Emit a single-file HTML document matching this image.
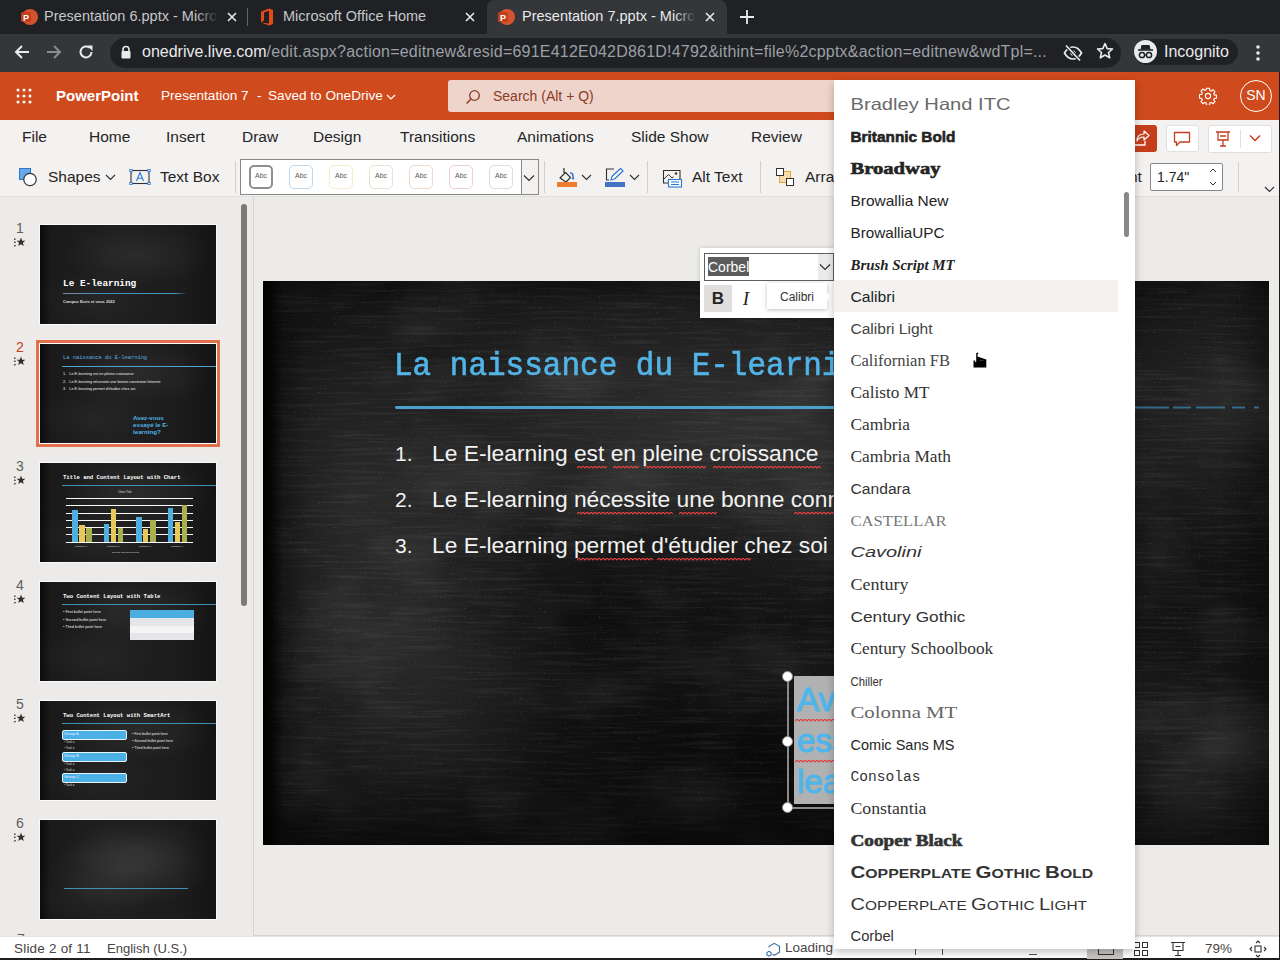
<!DOCTYPE html>
<html><head><meta charset="utf-8">
<style>
*{box-sizing:border-box;margin:0;padding:0}
html,body{width:1280px;height:960px;overflow:hidden;background:#eae9e7;font-family:"Liberation Sans",sans-serif;}
.a{position:absolute;white-space:nowrap}
#tabs{left:0;top:0;width:1280px;height:34px;background:#202124}
#addr{left:0;top:34px;width:1280px;height:38px;background:#35363a}
#hdr{left:0;top:72px;width:1280px;height:48px;background:#cf4a1c}
#rib{left:0;top:120px;width:1280px;height:77px;background:#f3f2f1;border-bottom:1px solid #e1dfdd}
#left{left:0;top:197px;width:253px;height:739px;background:#ecebe9}
#main{left:253px;top:197px;width:1026px;height:739px;background:#ecebe7;border-left:1px solid #d6d4d2;border-bottom:1px solid #d6d4d2}
#status{left:0;top:936px;width:1280px;height:24px;background:#fff;border-top:1px solid #e4e2e0;border-bottom:2px solid #1e1e1e}
#slide{left:263px;top:281px;width:1006px;height:564px;background:#1c1c1c;overflow:hidden}
#dd{left:834px;top:80px;width:301px;height:869px;background:#fff;box-shadow:0 3px 8px rgba(0,0,0,.25);overflow:hidden}
</style></head><body>
<div id="tabs" class="a">
 <svg class="a" style="left:20px;top:8px" width="18" height="18" viewBox="0 0 18 18"><circle cx="10" cy="9" r="8" fill="#d35230"/><rect x="1" y="4" width="10" height="10" rx="1.5" fill="#c43e1c"/><text x="6" y="12.5" font-family="Liberation Sans" font-weight="bold" font-size="9" fill="#fff" text-anchor="middle">P</text></svg>
 <div class="a" style="left:44px;top:8px;font-size:14.5px;color:#c4c7cb;width:172px;overflow:hidden">Presentation 6.pptx - Micro</div>
 <div class="a" style="left:196px;top:6px;width:22px;height:20px;background:linear-gradient(90deg,rgba(32,33,36,0),#202124)"></div>
 <svg class="a" style="left:227px;top:12px" width="10" height="10" viewBox="0 0 10 10"><path d="M1 1L9 9M9 1L1 9" stroke="#e8eaed" stroke-width="1.6"/></svg>
 <div class="a" style="left:247px;top:8px;width:1px;height:18px;background:#5f6368"></div>
 <svg class="a" style="left:259px;top:8px" width="16" height="18" viewBox="0 0 16 18"><path d="M2 3.5L10 0.5L14 2V16L10 17.5L2 14.5L10 15.5V2.8L5 4.5V12.5L2 14.5Z" fill="#e64a19"/></svg>
 <div class="a" style="left:283px;top:8px;font-size:14.5px;color:#c4c7cb">Microsoft Office Home</div>
 <svg class="a" style="left:465px;top:12px" width="10" height="10" viewBox="0 0 10 10"><path d="M1 1L9 9M9 1L1 9" stroke="#e8eaed" stroke-width="1.6"/></svg>
 <div class="a" style="left:487px;top:0px;width:240px;height:34px;background:#35363a;border-radius:8px 8px 0 0"></div>
 <svg class="a" style="left:497px;top:8px" width="18" height="18" viewBox="0 0 18 18"><circle cx="10" cy="9" r="8" fill="#d35230"/><rect x="1" y="4" width="10" height="10" rx="1.5" fill="#c43e1c"/><text x="6" y="12.5" font-family="Liberation Sans" font-weight="bold" font-size="9" fill="#fff" text-anchor="middle">P</text></svg>
 <div class="a" style="left:522px;top:8px;font-size:14.5px;color:#e8eaed;width:172px;overflow:hidden">Presentation 7.pptx - Micro</div>
 <div class="a" style="left:674px;top:6px;width:22px;height:20px;background:linear-gradient(90deg,rgba(53,54,58,0),#35363a)"></div>
 <svg class="a" style="left:705px;top:12px" width="10" height="10" viewBox="0 0 10 10"><path d="M1 1L9 9M9 1L1 9" stroke="#e8eaed" stroke-width="1.6"/></svg>
 <svg class="a" style="left:740px;top:10px" width="14" height="14" viewBox="0 0 14 14"><path d="M7 0V14M0 7H14" stroke="#e8eaed" stroke-width="1.8"/></svg>
</div>
<div id="addr" class="a">
 <svg class="a" style="left:13px;top:9px" width="18" height="18" viewBox="0 0 18 18"><path d="M16 9H3M9 3L3 9L9 15" stroke="#e8eaed" stroke-width="2" fill="none"/></svg>
 <svg class="a" style="left:45px;top:9px" width="18" height="18" viewBox="0 0 18 18"><path d="M2 9H15M9 3L15 9L9 15" stroke="#8a8b8e" stroke-width="2" fill="none"/></svg>
 <svg class="a" style="left:77px;top:9px" width="18" height="18" viewBox="0 0 18 18"><path d="M14.5 9A5.5 5.5 0 1 1 12.6 4.8" stroke="#e8eaed" stroke-width="2" fill="none"/><path d="M10 2.5H15.5V8Z" fill="#e8eaed"/></svg>
 <div class="a" style="left:110px;top:4px;width:1011px;height:30px;background:#202124;border-radius:15px"></div>
 <svg class="a" style="left:120px;top:11px" width="12" height="15" viewBox="0 0 12 15"><path d="M3 6V4.5A3 3 0 0 1 9 4.5V6" stroke="#e8eaed" stroke-width="1.6" fill="none"/><rect x="1.5" y="6" width="9" height="7.5" rx="1" fill="#e8eaed"/></svg>
 <div class="a" style="left:142px;top:9px;font-size:16px;color:#e8eaed;letter-spacing:0px">onedrive.live.com<span style="color:#9aa0a6;letter-spacing:0.21px">/edit.aspx?action=editnew&amp;resid=691E412E042D861D!4792&amp;ithint=file%2cpptx&amp;action=editnew&amp;wdTpl=...</span></div>
 <svg class="a" style="left:1063px;top:10px" width="20" height="18" viewBox="0 0 20 18"><path d="M1.5 9C4 4.5 7 3 10 3S16 4.5 18.5 9C16 13.5 13 15 10 15S4 13.5 1.5 9Z" fill="none" stroke="#e8eaed" stroke-width="1.7"/><circle cx="10" cy="9" r="2.6" fill="#e8eaed"/><path d="M3 1.5L17 16.5" stroke="#202124" stroke-width="3.5"/><path d="M3 1.5L17 16.5" stroke="#e8eaed" stroke-width="1.7"/></svg>
 <svg class="a" style="left:1096px;top:8px" width="18" height="18" viewBox="0 0 18 18"><path d="M9 1.5L11.2 6.6L16.5 7L12.5 10.5L13.7 15.8L9 13L4.3 15.8L5.5 10.5L1.5 7L6.8 6.6Z" fill="none" stroke="#e8eaed" stroke-width="1.6" stroke-linejoin="round"/></svg>
 <div class="a" style="left:1134px;top:5px;width:104px;height:26px;background:#202124;border-radius:13px"></div>
 <div class="a" style="left:1134px;top:6px;width:23px;height:23px;background:#e8eaed;border-radius:50%"></div>
 <svg class="a" style="left:1136px;top:9px" width="19" height="17" viewBox="0 0 19 17"><path d="M5.5 2L13.5 2L14.5 6.5L4.5 6.5Z" fill="#202124"/><path d="M2 7H17" stroke="#202124" stroke-width="1.6"/><circle cx="6" cy="12" r="2.6" fill="none" stroke="#202124" stroke-width="1.5"/><circle cx="13" cy="12" r="2.6" fill="none" stroke="#202124" stroke-width="1.5"/><path d="M8.6 12H10.4" stroke="#202124" stroke-width="1.3"/></svg>
 <div class="a" style="left:1164px;top:9px;font-size:16px;color:#e8eaed">Incognito</div>
 <svg class="a" style="left:1255px;top:10px" width="6" height="18" viewBox="0 0 6 18"><circle cx="3" cy="3" r="1.8" fill="#e8eaed"/><circle cx="3" cy="9" r="1.8" fill="#e8eaed"/><circle cx="3" cy="15" r="1.8" fill="#e8eaed"/></svg>
</div>
<div id="hdr" class="a">
 <svg class="a" style="left:16px;top:16px" width="16" height="16" viewBox="0 0 16 16" fill="#fff"><circle cx="2" cy="2" r="1.5"/><circle cx="8" cy="2" r="1.5"/><circle cx="14" cy="2" r="1.5"/><circle cx="2" cy="8" r="1.5"/><circle cx="8" cy="8" r="1.5"/><circle cx="14" cy="8" r="1.5"/><circle cx="2" cy="14" r="1.5"/><circle cx="8" cy="14" r="1.5"/><circle cx="14" cy="14" r="1.5"/></svg>
 <div class="a" style="left:56px;top:15px;font-size:15px;font-weight:bold;color:#fff">PowerPoint</div>
 <div class="a" style="left:161px;top:16px;font-size:13.6px;color:#fff">Presentation 7</div><div class="a" style="left:257px;top:16px;font-size:13.6px;color:#fff">-</div><div class="a" style="left:268px;top:16px;font-size:13.6px;color:#fff">Saved to OneDrive</div>
 <svg class="a" style="left:386px;top:21px" width="10" height="8" viewBox="0 0 10 8"><path d="M1 2L5 6L9 2" stroke="#fff" stroke-width="1.2" fill="none"/></svg>
 <div class="a" style="left:448px;top:8px;width:420px;height:32px;background:#eed4cb;border-radius:3px"></div>
 <svg class="a" style="left:465px;top:17px" width="16" height="16" viewBox="0 0 16 16"><circle cx="9.5" cy="6.5" r="4.8" fill="none" stroke="#8c3a25" stroke-width="1.3"/><path d="M6 10L1.5 14.5" stroke="#8c3a25" stroke-width="1.4"/></svg>
 <div class="a" style="left:493px;top:16px;font-size:14px;color:#8c3a25">Search (Alt + Q)</div>
 <svg class="a" style="left:1199px;top:15px" width="18" height="18" viewBox="0 0 18 18"><path fill="none" stroke="#fff" stroke-width="1.1" d="M7.6 1.2h2.8l.4 2.2 1.3.6 1.9-1.3 2 2-1.3 1.9.6 1.3 2.2.4v2.8l-2.2.4-.6 1.3 1.3 1.9-2 2-1.9-1.3-1.3.6-.4 2.2H7.6l-.4-2.2-1.3-.6-1.9 1.3-2-2 1.3-1.9-.6-1.3-2.2-.4V7.6l2.2-.4.6-1.3-1.3-1.9 2-2 1.9 1.3 1.3-.6z"/><circle cx="9" cy="9" r="2.6" fill="none" stroke="#fff" stroke-width="1.1"/></svg>
 <div class="a" style="left:1240px;top:8px;width:32px;height:32px;border:1px solid #fff;border-radius:50%;"></div>
 <div class="a" style="left:1240px;top:15px;width:32px;text-align:center;font-size:14px;color:#fff">SN</div>
</div>
<div id="rib" class="a">
 <div class="a" style="left:22px;top:8px;font-size:15.5px;color:#252423">File</div>
 <div class="a" style="left:89px;top:8px;font-size:15.5px;color:#252423">Home</div>
 <div class="a" style="left:166px;top:8px;font-size:15.5px;color:#252423">Insert</div>
 <div class="a" style="left:242px;top:8px;font-size:15.5px;color:#252423">Draw</div>
 <div class="a" style="left:313px;top:8px;font-size:15.5px;color:#252423">Design</div>
 <div class="a" style="left:400px;top:8px;font-size:15.5px;color:#252423">Transitions</div>
 <div class="a" style="left:517px;top:8px;font-size:15.5px;color:#252423">Animations</div>
 <div class="a" style="left:631px;top:8px;font-size:15.5px;color:#252423">Slide Show</div>
 <div class="a" style="left:751px;top:8px;font-size:15.5px;color:#252423">Review</div>
 <!-- right buttons -->
 <div class="a" style="left:1100px;top:5px;width:57px;height:27px;background:#c43e1c;border-radius:3px"></div>
 <svg class="a" style="left:1130px;top:9px" width="20" height="18" viewBox="0 0 20 18"><path d="M3 8V16H15V12" stroke="#fff" stroke-width="1.3" fill="none"/><path d="M7 12C7 7 10 5 14 5V2L19 6.5L14 11V8C11 8 8.5 9 7 12Z" stroke="#fff" stroke-width="1.2" fill="none" stroke-linejoin="round"/></svg>
 <div class="a" style="left:1166px;top:5px;width:33px;height:27px;background:#fff;border:1px solid #e1dfdd;border-radius:3px"></div>
 <svg class="a" style="left:1173px;top:11px" width="18" height="16" viewBox="0 0 18 16"><path d="M1.5 1.5H16.5V11H7L3.5 14.5V11H1.5Z" stroke="#c43e1c" stroke-width="1.3" fill="none" stroke-linejoin="round"/></svg>
 <div class="a" style="left:1208px;top:5px;width:64px;height:28px;background:#fff;border:1px solid #e1dfdd;border-radius:3px"></div>
 <svg class="a" style="left:1214px;top:10px" width="18" height="18" viewBox="0 0 18 18"><path d="M2 2H16M4 2V10H14V2M9 10V16M6 16H12M6 6H12" stroke="#c43e1c" stroke-width="1.3" fill="none"/></svg>
 <div class="a" style="left:1240px;top:10px;width:1px;height:18px;background:#e1dfdd"></div>
 <svg class="a" style="left:1249px;top:14px" width="12" height="8" viewBox="0 0 12 8"><path d="M1 1.5L6 6.5L11 1.5" stroke="#c43e1c" stroke-width="1.5" fill="none"/></svg>
 <!-- toolbar row -->
 <svg class="a" style="left:18px;top:47px" width="20" height="20" viewBox="0 0 20 20"><rect x="1.5" y="1.5" width="11" height="11" fill="#6aa7e8" stroke="#2b79d0" stroke-width="1"/><circle cx="12" cy="12.5" r="6.2" fill="#fff" stroke="#323130" stroke-width="1.2"/></svg>
 <div class="a" style="left:48px;top:48px;font-size:15.5px;color:#252423">Shapes</div>
 <svg class="a" style="left:105px;top:54px" width="11" height="7" viewBox="0 0 11 7"><path d="M1 1L5.5 5.5L10 1" stroke="#323130" stroke-width="1.2" fill="none"/></svg>
 <svg class="a" style="left:129px;top:49px" width="22" height="16" viewBox="0 0 22 16"><rect x="2" y="1.5" width="18" height="13" fill="none" stroke="#323130" stroke-width="1.1"/><rect x="0.8" y="0.3" width="2.4" height="2.4" fill="#fff" stroke="#2b79d0" stroke-width=".9"/><rect x="18.8" y="0.3" width="2.4" height="2.4" fill="#fff" stroke="#2b79d0" stroke-width=".9"/><rect x="0.8" y="13.3" width="2.4" height="2.4" fill="#fff" stroke="#2b79d0" stroke-width=".9"/><rect x="18.8" y="13.3" width="2.4" height="2.4" fill="#fff" stroke="#2b79d0" stroke-width=".9"/><path d="M7.5 12L11 3.5L14.5 12M8.6 9.2H13.4" stroke="#2b79d0" stroke-width="1.1" fill="none"/></svg>
 <div class="a" style="left:160px;top:48px;font-size:15.5px;color:#252423">Text Box</div>
 <div class="a" style="left:235px;top:41px;width:1px;height:32px;background:#d2d0ce"></div>
 <div class="a" style="left:240px;top:39px;width:299px;height:36px;background:#fff;border:1px solid #8a8886"></div>
 <div class="a" style="left:521px;top:40px;width:17px;height:34px;background:#f3f2f1;border-left:1px solid #8a8886"></div>
 <svg class="a" style="left:523px;top:54px" width="12" height="8" viewBox="0 0 12 8"><path d="M1 1.5L6 6.5L11 1.5" stroke="#323130" stroke-width="1.2" fill="none"/></svg>
 <div class="a" style="left:249px;top:45px;width:24px;height:24px;border:2px solid #8f8f8f;border-radius:5px"></div>
 <div class="a" style="left:289px;top:45px;width:24px;height:24px;border:1.5px solid #bcd7ea;border-radius:5px"></div>
 <div class="a" style="left:329px;top:45px;width:24px;height:24px;border:1.5px solid #f4ecc8;border-radius:5px"></div>
 <div class="a" style="left:369px;top:45px;width:24px;height:24px;border:1.5px solid #e6e3d2;border-radius:5px"></div>
 <div class="a" style="left:409px;top:45px;width:24px;height:24px;border:1.5px solid #f1d8cc;border-radius:5px"></div>
 <div class="a" style="left:449px;top:45px;width:24px;height:24px;border:1.5px solid #efcfd2;border-radius:5px"></div>
 <div class="a" style="left:489px;top:45px;width:24px;height:24px;border:1.5px solid #dcdce4;border-radius:5px"></div>
 <div class="a" style="left:249px;top:52px;width:24px;text-align:center;font-size:7px;color:#555">Abc</div>
 <div class="a" style="left:289px;top:52px;width:24px;text-align:center;font-size:7px;color:#555">Abc</div>
 <div class="a" style="left:329px;top:52px;width:24px;text-align:center;font-size:7px;color:#555">Abc</div>
 <div class="a" style="left:369px;top:52px;width:24px;text-align:center;font-size:7px;color:#555">Abc</div>
 <div class="a" style="left:409px;top:52px;width:24px;text-align:center;font-size:7px;color:#555">Abc</div>
 <div class="a" style="left:449px;top:52px;width:24px;text-align:center;font-size:7px;color:#555">Abc</div>
 <div class="a" style="left:489px;top:52px;width:24px;text-align:center;font-size:7px;color:#555">Abc</div>
 <div class="a" style="left:544px;top:41px;width:1px;height:32px;background:#d2d0ce"></div>
 <svg class="a" style="left:557px;top:47px" width="20" height="20" viewBox="0 0 20 20"><path d="M7 1V6M3 11L8.5 5.5L13.5 10.5L9 15Z" stroke="#323130" stroke-width="1.2" fill="none" stroke-linejoin="round"/><path d="M13 6C15.5 5.5 16.5 8 16 12" stroke="#2b79d0" stroke-width="1.6" fill="none"/><path d="M14.5 11L16 13L17.5 11" fill="#2b79d0"/><rect x="0" y="15" width="20" height="5" fill="#ed7d31"/></svg>
 <svg class="a" style="left:581px;top:54px" width="11" height="7" viewBox="0 0 11 7"><path d="M1 1L5.5 5.5L10 1" stroke="#323130" stroke-width="1.2" fill="none"/></svg>
 <svg class="a" style="left:605px;top:47px" width="20" height="20" viewBox="0 0 20 20"><path d="M9 2H1.5V13H4" stroke="#323130" stroke-width="1.1" fill="none"/><path d="M6 13L7 9.5L15.5 1.5L18 4L9.5 12Z" stroke="#2b79d0" stroke-width="1.2" fill="#fff" stroke-linejoin="round"/><rect x="0" y="15" width="20" height="5" fill="#4472c4"/></svg>
 <svg class="a" style="left:629px;top:54px" width="11" height="7" viewBox="0 0 11 7"><path d="M1 1L5.5 5.5L10 1" stroke="#323130" stroke-width="1.2" fill="none"/></svg>
 <div class="a" style="left:647px;top:41px;width:1px;height:32px;background:#d2d0ce"></div>
 <svg class="a" style="left:662px;top:49px" width="22" height="19" viewBox="0 0 22 19"><path d="M18 10V1.5H1.5V14H6" stroke="#323130" stroke-width="1.1" fill="none"/><path d="M2 10L6.5 5.5L10 9L11.5 7.5" stroke="#323130" stroke-width="1" fill="none"/><circle cx="14" cy="4.5" r="1.2" fill="#323130"/><rect x="6.5" y="10.5" width="13" height="7.5" fill="#fff" stroke="#2b79d0" stroke-width="1.1"/><path d="M9 13H17M9 15.5H17" stroke="#2b79d0" stroke-width="1"/></svg>
 <div class="a" style="left:692px;top:48px;font-size:15.5px;color:#252423">Alt Text</div>
 <div class="a" style="left:760px;top:41px;width:1px;height:32px;background:#d2d0ce"></div>
 <svg class="a" style="left:775px;top:47px" width="20" height="20" viewBox="0 0 20 20"><rect x="4.5" y="4.5" width="11" height="11" fill="#f5dca8" stroke="#e8a23a" stroke-width="1"/><rect x="1.5" y="1.5" width="7" height="7" fill="#fff" stroke="#323130" stroke-width="1"/><rect x="11.5" y="11.5" width="7" height="7" fill="#fff" stroke="#323130" stroke-width="1"/></svg>
 <div class="a" style="left:805px;top:48px;font-size:15.5px;color:#252423">Arrange</div>
 <div class="a" style="left:1097px;top:48px;font-size:15.5px;color:#252423">Height</div>
 <div class="a" style="left:1150px;top:43px;width:73px;height:28px;background:#fff;border:1px solid #8a8886;border-radius:2px"></div>
 <div class="a" style="left:1157px;top:49px;font-size:14px;color:#252423">1.74"</div>
 <svg class="a" style="left:1208px;top:45px" width="10" height="24" viewBox="0 0 10 24"><path d="M2 7L5 4L8 7M2 17L5 20L8 17" stroke="#323130" stroke-width="1" fill="none"/></svg>
 <div class="a" style="left:1238px;top:42px;width:1px;height:30px;background:#d2d0ce"></div>
 <svg class="a" style="left:1264px;top:66px" width="11" height="7" viewBox="0 0 11 7"><path d="M1 1L5.5 5.5L10 1" stroke="#323130" stroke-width="1.2" fill="none"/></svg>
</div>
<div id="left" class="a">
 <div class="a" style="left:13px;top:23px;width:14px;text-align:center;font-size:14px;color:#605e5c">1</div>
 <svg class="a" style="left:13px;top:40px" width="13" height="11" viewBox="0 0 13 11"><rect x="1" y="1.5" width="1.6" height="1.4" fill="#444"/><rect x="1" y="4.6" width="1.6" height="1.4" fill="#444"/><path d="M1 9.3L2.8 8.2" stroke="#444" stroke-width="1.2"/><path d="M8 0.6L9.2 3.7L12.4 3.8L9.9 5.8L10.8 9L8 7.2L5.2 9L6.1 5.8L3.6 3.8L6.8 3.7Z" fill="#323130"/></svg>
 <div class="a" style="left:39px;top:27px;width:178px;height:101px;background:#fafafa"></div>
 <div class="a" style="left:40px;top:28px;width:176px;height:99px;overflow:hidden;background:radial-gradient(ellipse 60% 45% at 55% 30%, rgba(62,62,62,.4), rgba(0,0,0,0) 70%),radial-gradient(ellipse 50% 40% at 30% 75%, rgba(55,55,55,.3), rgba(0,0,0,0) 70%),linear-gradient(90deg,#0b0b0b 0,#1a1a1a 6%,#1f1f1f 40%,#1c1c1c 80%,#141414 100%);"><div class="a" style="left:23px;top:53px;font-family:'Liberation Mono';font-weight:bold;font-size:9.4px;color:#fff">Le E-learning</div>
<div class="a" style="left:23px;top:68px;width:124px;height:1px;background:linear-gradient(90deg,#889,#3b8fc0 30%,#4a9ac0 90%,rgba(0,0,0,0))"></div>
<div class="a" style="left:23px;top:74px;font-size:4px;font-weight:bold;color:#ddd">Campus Ecris et vous 2022</div></div>
 <div class="a" style="left:13px;top:142px;width:14px;text-align:center;font-size:14px;color:#c43e1c">2</div>
 <svg class="a" style="left:13px;top:159px" width="13" height="11" viewBox="0 0 13 11"><rect x="1" y="1.5" width="1.6" height="1.4" fill="#444"/><rect x="1" y="4.6" width="1.6" height="1.4" fill="#444"/><path d="M1 9.3L2.8 8.2" stroke="#444" stroke-width="1.2"/><path d="M8 0.6L9.2 3.7L12.4 3.8L9.9 5.8L10.8 9L8 7.2L5.2 9L6.1 5.8L3.6 3.8L6.8 3.7Z" fill="#323130"/></svg>
 <div class="a" style="left:36px;top:143px;width:184px;height:107px;background:#e8825f;border:3px solid #e0714a"></div>
 <div class="a" style="left:39px;top:146px;width:178px;height:101px;background:#fff"></div>
 <div class="a" style="left:40px;top:147px;width:176px;height:99px;overflow:hidden;background:radial-gradient(ellipse 60% 45% at 55% 30%, rgba(62,62,62,.4), rgba(0,0,0,0) 70%),radial-gradient(ellipse 50% 40% at 30% 75%, rgba(55,55,55,.3), rgba(0,0,0,0) 70%),linear-gradient(90deg,#0b0b0b 0,#1a1a1a 6%,#1f1f1f 40%,#1c1c1c 80%,#141414 100%);"><div class="a" style="left:23px;top:11px;font-family:'Liberation Mono';font-size:5.4px;color:#59b3e0">La naissance du E-learning</div>
<div class="a" style="left:22px;top:22px;width:154px;height:1px;background:#4fa3cf"></div>
<div class="a" style="left:23px;top:27px;font-size:3.8px;line-height:7.5px;color:#eee">1.&nbsp;&nbsp; Le E-learning est en pleine croissance<br>2.&nbsp;&nbsp; Le E-learning nécessite une bonne connexion Internet<br>3.&nbsp;&nbsp; Le E-learning permet d'étudier chez soi</div>
<div class="a" style="left:93px;top:70px;font-size:6.2px;line-height:7px;font-weight:bold;color:#4fb3e6">Avez-vous<br>essayé le E-<br>learning?</div></div>
 <div class="a" style="left:13px;top:261px;width:14px;text-align:center;font-size:14px;color:#605e5c">3</div>
 <svg class="a" style="left:13px;top:278px" width="13" height="11" viewBox="0 0 13 11"><rect x="1" y="1.5" width="1.6" height="1.4" fill="#444"/><rect x="1" y="4.6" width="1.6" height="1.4" fill="#444"/><path d="M1 9.3L2.8 8.2" stroke="#444" stroke-width="1.2"/><path d="M8 0.6L9.2 3.7L12.4 3.8L9.9 5.8L10.8 9L8 7.2L5.2 9L6.1 5.8L3.6 3.8L6.8 3.7Z" fill="#323130"/></svg>
 <div class="a" style="left:39px;top:265px;width:178px;height:101px;background:#fafafa"></div>
 <div class="a" style="left:40px;top:266px;width:176px;height:99px;overflow:hidden;background:radial-gradient(ellipse 60% 45% at 55% 30%, rgba(62,62,62,.4), rgba(0,0,0,0) 70%),radial-gradient(ellipse 50% 40% at 30% 75%, rgba(55,55,55,.3), rgba(0,0,0,0) 70%),linear-gradient(90deg,#0b0b0b 0,#1a1a1a 6%,#1f1f1f 40%,#1c1c1c 80%,#141414 100%);"><div class="a" style="left:23px;top:11px;font-family:'Liberation Mono';font-weight:bold;font-size:5.6px;color:#fff">Title and Content Layout with Chart</div>
<div class="a" style="left:22px;top:22px;width:154px;height:1px;background:#3f8fb6"></div>
<div class="a" style="left:78px;top:27px;font-size:3px;color:#ddd">Chart Title</div>
<svg class="a" style="left:0;top:0" width="176" height="99" viewBox="0 0 176 99">
<g stroke="#fafafa" stroke-width="1"><path d="M26 35.5H153M26 42.5H153M26 50.5H153M26 57.5H153M26 64.5H153M26 71.5H153M26 79.5H153"/></g>
<g fill="#4fb0e0"><rect x="32" y="47" width="6" height="32"/><rect x="64" y="61" width="5" height="18"/><rect x="96" y="54" width="6" height="25"/><rect x="128" y="45" width="5" height="34"/></g>
<g fill="#e8c85a"><rect x="39" y="62" width="6" height="17"/><rect x="71" y="46" width="5" height="33"/><rect x="103" y="66" width="5" height="13"/><rect x="135" y="59" width="5" height="20"/></g>
<g fill="#a9b050"><rect x="46" y="65" width="6" height="14"/><rect x="78" y="65" width="5" height="14"/><rect x="110" y="57" width="6" height="22"/><rect x="142" y="42" width="5" height="37"/></g>
<g fill="#ddd" font-size="2.5" font-family="Liberation Sans"><text x="35" y="84">Category 1</text><text x="67" y="84">Category 2</text><text x="99" y="84">Category 3</text><text x="131" y="84">Category 4</text><text x="72" y="90">Series1 Series2 Series3</text></g>
</svg></div>
 <div class="a" style="left:13px;top:380px;width:14px;text-align:center;font-size:14px;color:#605e5c">4</div>
 <svg class="a" style="left:13px;top:397px" width="13" height="11" viewBox="0 0 13 11"><rect x="1" y="1.5" width="1.6" height="1.4" fill="#444"/><rect x="1" y="4.6" width="1.6" height="1.4" fill="#444"/><path d="M1 9.3L2.8 8.2" stroke="#444" stroke-width="1.2"/><path d="M8 0.6L9.2 3.7L12.4 3.8L9.9 5.8L10.8 9L8 7.2L5.2 9L6.1 5.8L3.6 3.8L6.8 3.7Z" fill="#323130"/></svg>
 <div class="a" style="left:39px;top:384px;width:178px;height:101px;background:#fafafa"></div>
 <div class="a" style="left:40px;top:385px;width:176px;height:99px;overflow:hidden;background:radial-gradient(ellipse 60% 45% at 55% 30%, rgba(62,62,62,.4), rgba(0,0,0,0) 70%),radial-gradient(ellipse 50% 40% at 30% 75%, rgba(55,55,55,.3), rgba(0,0,0,0) 70%),linear-gradient(90deg,#0b0b0b 0,#1a1a1a 6%,#1f1f1f 40%,#1c1c1c 80%,#141414 100%);"><div class="a" style="left:23px;top:11px;font-family:'Liberation Mono';font-weight:bold;font-size:5.6px;color:#fff">Two Content Layout with Table</div>
<div class="a" style="left:22px;top:22px;width:154px;height:1px;background:#3f8fb6"></div>
<div class="a" style="left:23px;top:27px;font-size:3.8px;line-height:7.5px;color:#eee">• First bullet point here<br>• Second bullet point here<br>• Third bullet point here</div>
<div class="a" style="left:90px;top:28px;width:64px;height:30px;background:#e6e6ea"></div>
<div class="a" style="left:90px;top:28px;width:64px;height:8px;background:#4aaee3"></div>
<div class="a" style="left:90px;top:44px;width:64px;height:7px;background:#f4f4f4"></div></div>
 <div class="a" style="left:13px;top:499px;width:14px;text-align:center;font-size:14px;color:#605e5c">5</div>
 <svg class="a" style="left:13px;top:516px" width="13" height="11" viewBox="0 0 13 11"><rect x="1" y="1.5" width="1.6" height="1.4" fill="#444"/><rect x="1" y="4.6" width="1.6" height="1.4" fill="#444"/><path d="M1 9.3L2.8 8.2" stroke="#444" stroke-width="1.2"/><path d="M8 0.6L9.2 3.7L12.4 3.8L9.9 5.8L10.8 9L8 7.2L5.2 9L6.1 5.8L3.6 3.8L6.8 3.7Z" fill="#323130"/></svg>
 <div class="a" style="left:39px;top:503px;width:178px;height:101px;background:#fafafa"></div>
 <div class="a" style="left:40px;top:504px;width:176px;height:99px;overflow:hidden;background:radial-gradient(ellipse 60% 45% at 55% 30%, rgba(62,62,62,.4), rgba(0,0,0,0) 70%),radial-gradient(ellipse 50% 40% at 30% 75%, rgba(55,55,55,.3), rgba(0,0,0,0) 70%),linear-gradient(90deg,#0b0b0b 0,#1a1a1a 6%,#1f1f1f 40%,#1c1c1c 80%,#141414 100%);"><div class="a" style="left:23px;top:11px;font-family:'Liberation Mono';font-weight:bold;font-size:5.6px;color:#fff">Two Content Layout with SmartArt</div>
<div class="a" style="left:22px;top:22px;width:154px;height:1px;background:#3f8fb6"></div>
<div class="a" style="left:22px;top:29px;width:65px;height:10px;background:#4ab0e6;border:1px solid #e8f4fb;border-radius:2px"></div>
<div class="a" style="left:22px;top:51px;width:65px;height:10px;background:#4ab0e6;border:1px solid #e8f4fb;border-radius:2px"></div>
<div class="a" style="left:22px;top:72px;width:65px;height:10px;background:#4ab0e6;border:1px solid #e8f4fb;border-radius:2px"></div>
<div class="a" style="left:24px;top:30px;font-size:4px;color:#eef">Group A</div>
<div class="a" style="left:24px;top:52px;font-size:4px;color:#eef">Group B</div>
<div class="a" style="left:24px;top:73px;font-size:4px;color:#eef">Group C</div>
<div class="a" style="left:24px;top:39px;font-size:3px;line-height:5.5px;color:#ddd">• Task a<br>• Task a</div>
<div class="a" style="left:24px;top:61px;font-size:3px;line-height:5.5px;color:#ddd">• Task a<br>• Task a</div>
<div class="a" style="left:24px;top:82px;font-size:3px;line-height:5.5px;color:#ddd">• Task a</div>
<div class="a" style="left:92px;top:30px;font-size:3.6px;line-height:7px;color:#eee">• First bullet point here<br>• Second bullet point here<br>• Third bullet point here</div></div>
 <div class="a" style="left:13px;top:618px;width:14px;text-align:center;font-size:14px;color:#605e5c">6</div>
 <svg class="a" style="left:13px;top:635px" width="13" height="11" viewBox="0 0 13 11"><rect x="1" y="1.5" width="1.6" height="1.4" fill="#444"/><rect x="1" y="4.6" width="1.6" height="1.4" fill="#444"/><path d="M1 9.3L2.8 8.2" stroke="#444" stroke-width="1.2"/><path d="M8 0.6L9.2 3.7L12.4 3.8L9.9 5.8L10.8 9L8 7.2L5.2 9L6.1 5.8L3.6 3.8L6.8 3.7Z" fill="#323130"/></svg>
 <div class="a" style="left:39px;top:622px;width:178px;height:101px;background:#fafafa"></div>
 <div class="a" style="left:40px;top:623px;width:176px;height:99px;overflow:hidden;background:radial-gradient(ellipse 60% 45% at 55% 30%, rgba(62,62,62,.4), rgba(0,0,0,0) 70%),radial-gradient(ellipse 50% 40% at 30% 75%, rgba(55,55,55,.3), rgba(0,0,0,0) 70%),linear-gradient(90deg,#0b0b0b 0,#1a1a1a 6%,#1f1f1f 40%,#1c1c1c 80%,#141414 100%);"><div class="a" style="left:8px;top:12px;width:160px;height:75px;background:radial-gradient(ellipse at 50% 50%,rgba(90,90,90,.35),rgba(0,0,0,0) 70%)"></div>
<div class="a" style="left:24px;top:68px;width:124px;height:1px;background:#3f8fb6"></div></div>
 <div class="a" style="left:14px;top:734px;width:14px;text-align:center;font-size:14px;color:#605e5c;height:5px;overflow:hidden">7</div>
 <div class="a" style="left:241px;top:7px;width:6px;height:402px;background:#7c7b79;border-radius:3px"></div>
</div>
<div id="main" class="a"></div>
<div id="slide" class="a">
 <svg class="a" style="left:0;top:0" width="1006" height="564">
  <defs>
   <filter id="nz" x="0" y="0" width="100%" height="100%"><feTurbulence type="fractalNoise" baseFrequency="0.015 0.35" numOctaves="3" seed="5"/><feColorMatrix values="0 0 0 0 1  0 0 0 0 1  0 0 0 0 1  0 0 0 3 -1.45"/></filter>
   <filter id="nz2" x="0" y="0" width="100%" height="100%"><feTurbulence type="fractalNoise" baseFrequency="0.008 0.012" numOctaves="4" seed="11"/><feColorMatrix values="0 0 0 0 1  0 0 0 0 1  0 0 0 0 1  0 0 0 2.2 -1.0"/></filter>
   <filter id="sp" x="0" y="0" width="100%" height="100%"><feTurbulence type="fractalNoise" baseFrequency="0.8" numOctaves="1" seed="2"/><feColorMatrix values="0 0 0 0 1  0 0 0 0 1  0 0 0 0 1  0 0 0 9 -6.2"/></filter>
   <radialGradient id="p1" cx=".5" cy=".5" r=".5"><stop offset="0" stop-color="#3a3a3a" stop-opacity=".75"/><stop offset="1" stop-color="#3a3a3a" stop-opacity="0"/></radialGradient>
   <radialGradient id="dk" cx=".5" cy=".5" r=".5"><stop offset="0" stop-color="#000" stop-opacity=".55"/><stop offset="1" stop-color="#000" stop-opacity="0"/></radialGradient>
   <linearGradient id="gl" x1="0" x2="1" y1="0" y2="0"><stop offset="0" stop-color="#000" stop-opacity=".95"/><stop offset=".008" stop-color="#000" stop-opacity=".75"/><stop offset=".02" stop-color="#000" stop-opacity=".2"/><stop offset=".045" stop-color="#000" stop-opacity="0"/><stop offset=".95" stop-color="#000" stop-opacity="0"/><stop offset="1" stop-color="#000" stop-opacity=".3"/></linearGradient>
   <linearGradient id="gb" x1="0" x2="0" y1="0" y2="1"><stop offset="0" stop-color="#000" stop-opacity=".3"/><stop offset=".04" stop-color="#000" stop-opacity="0"/><stop offset=".85" stop-color="#000" stop-opacity="0"/><stop offset="1" stop-color="#000" stop-opacity=".5"/></linearGradient>
  </defs>
  <rect width="1006" height="564" fill="#131313"/>
  <ellipse cx="480" cy="150" rx="520" ry="190" fill="url(#p1)"/>
  <ellipse cx="150" cy="360" rx="160" ry="220" fill="url(#p1)" opacity=".8"/>
  <ellipse cx="90" cy="220" rx="110" ry="200" fill="url(#p1)" opacity=".6"/>
  <ellipse cx="960" cy="120" rx="120" ry="160" fill="url(#p1)" opacity=".6"/>
  <ellipse cx="950" cy="520" rx="130" ry="140" fill="url(#p1)" opacity=".5"/>
  <ellipse cx="700" cy="420" rx="260" ry="90" fill="url(#p1)" opacity=".6"/>
  <ellipse cx="520" cy="470" rx="300" ry="110" fill="url(#dk)"/>
  <ellipse cx="350" cy="310" rx="200" ry="90" fill="url(#dk)" opacity=".6"/>
  <rect width="1006" height="564" filter="url(#nz2)" opacity=".08"/>
  <rect width="1006" height="564" filter="url(#nz)" opacity=".05"/>
  <rect width="1006" height="564" filter="url(#sp)" opacity=".12"/>
  <rect width="1006" height="564" fill="url(#gl)"/>
  <rect width="1006" height="564" fill="url(#gb)"/>
 </svg>
 <div class="a" style="left:131px;top:69px;font-family:'Liberation Mono',monospace;font-size:31px;color:#52b4e6;-webkit-text-stroke:0.6px #52b4e6;transform:scaleY(1.1);transform-origin:0 100%">La naissance du E-learning</div>
 <div class="a" style="left:132px;top:125px;width:740px;height:3px;background:#4aa8d8;border-radius:2px;opacity:.95"></div>
 <svg class="a" style="left:870px;top:124px" width="130" height="5" viewBox="0 0 130 5"><path d="M0 2.5H36M40 2.5H58M63 2.5H92M99 2.5H112M121 2.5H126" stroke="#3f9ccd" stroke-width="2" opacity=".6"/></svg>
 <div class="a" style="left:132px;top:150px;font-size:21px;color:#f2f2f2;line-height:45.75px">1.<br>2.<br>3.</div>
 <div class="a" style="left:169px;top:150px;font-size:22.8px;color:#f2f2f2;line-height:45.75px">Le E-learning est en pleine croissance<br>Le E-learning nécessite une bonne connexion Internet<br>Le E-learning permet d'étudier chez soi</div>
 <svg class="a" style="left:314px;top:185px" width="30" height="3" viewBox="0 0 30 3"><polyline points="0,2 2,0 4,2 6,0 8,2 10,0 12,2 14,0 16,2 18,0 20,2 22,0 24,2 26,0 28,2 30,0" stroke="#e04040" stroke-width="1.1" fill="none"/></svg>
 <svg class="a" style="left:350px;top:185px" width="26" height="3" viewBox="0 0 26 3"><polyline points="0,2 2,0 4,2 6,0 8,2 10,0 12,2 14,0 16,2 18,0 20,2 22,0 24,2 26,0" stroke="#e04040" stroke-width="1.1" fill="none"/></svg>
 <svg class="a" style="left:381px;top:185px" width="62" height="3" viewBox="0 0 62 3"><polyline points="0,2 2,0 4,2 6,0 8,2 10,0 12,2 14,0 16,2 18,0 20,2 22,0 24,2 26,0 28,2 30,0 32,2 34,0 36,2 38,0 40,2 42,0 44,2 46,0 48,2 50,0 52,2 54,0 56,2 58,0 60,2 62,0" stroke="#e04040" stroke-width="1.1" fill="none"/></svg>
 <svg class="a" style="left:450px;top:185px" width="108" height="3" viewBox="0 0 108 3"><polyline points="0,2 2,0 4,2 6,0 8,2 10,0 12,2 14,0 16,2 18,0 20,2 22,0 24,2 26,0 28,2 30,0 32,2 34,0 36,2 38,0 40,2 42,0 44,2 46,0 48,2 50,0 52,2 54,0 56,2 58,0 60,2 62,0 64,2 66,0 68,2 70,0 72,2 74,0 76,2 78,0 80,2 82,0 84,2 86,0 88,2 90,0 92,2 94,0 96,2 98,0 100,2 102,0 104,2 106,0 108,2" stroke="#e04040" stroke-width="1.1" fill="none"/></svg>
 <svg class="a" style="left:314px;top:231px" width="96" height="3" viewBox="0 0 96 3"><polyline points="0,2 2,0 4,2 6,0 8,2 10,0 12,2 14,0 16,2 18,0 20,2 22,0 24,2 26,0 28,2 30,0 32,2 34,0 36,2 38,0 40,2 42,0 44,2 46,0 48,2 50,0 52,2 54,0 56,2 58,0 60,2 62,0 64,2 66,0 68,2 70,0 72,2 74,0 76,2 78,0 80,2 82,0 84,2 86,0 88,2 90,0 92,2 94,0 96,2" stroke="#e04040" stroke-width="1.1" fill="none"/></svg>
 <svg class="a" style="left:416px;top:231px" width="38" height="3" viewBox="0 0 38 3"><polyline points="0,2 2,0 4,2 6,0 8,2 10,0 12,2 14,0 16,2 18,0 20,2 22,0 24,2 26,0 28,2 30,0 32,2 34,0 36,2 38,0" stroke="#e04040" stroke-width="1.1" fill="none"/></svg>
 <svg class="a" style="left:531px;top:231px" width="42" height="3" viewBox="0 0 42 3"><polyline points="0,2 2,0 4,2 6,0 8,2 10,0 12,2 14,0 16,2 18,0 20,2 22,0 24,2 26,0 28,2 30,0 32,2 34,0 36,2 38,0 40,2 42,0" stroke="#e04040" stroke-width="1.1" fill="none"/></svg>
 <svg class="a" style="left:314px;top:277px" width="76" height="3" viewBox="0 0 76 3"><polyline points="0,2 2,0 4,2 6,0 8,2 10,0 12,2 14,0 16,2 18,0 20,2 22,0 24,2 26,0 28,2 30,0 32,2 34,0 36,2 38,0 40,2 42,0 44,2 46,0 48,2 50,0 52,2 54,0 56,2 58,0 60,2 62,0 64,2 66,0 68,2 70,0 72,2 74,0 76,2" stroke="#e04040" stroke-width="1.1" fill="none"/></svg>
 <svg class="a" style="left:394px;top:277px" width="94" height="3" viewBox="0 0 94 3"><polyline points="0,2 2,0 4,2 6,0 8,2 10,0 12,2 14,0 16,2 18,0 20,2 22,0 24,2 26,0 28,2 30,0 32,2 34,0 36,2 38,0 40,2 42,0 44,2 46,0 48,2 50,0 52,2 54,0 56,2 58,0 60,2 62,0 64,2 66,0 68,2 70,0 72,2 74,0 76,2 78,0 80,2 82,0 84,2 86,0 88,2 90,0 92,2 94,0" stroke="#e04040" stroke-width="1.1" fill="none"/></svg>
 <div class="a" style="left:531px;top:395px;width:80px;height:128px;background:#b1b1b1"></div>
 <div class="a" style="left:534px;top:398px;font-size:33px;font-weight:normal;-webkit-text-stroke:1.1px #4fb5ea;color:#4fb5ea;line-height:41px">Avez-vous<br>essayé le E-<br>learning?</div>
 <svg class="a" style="left:532px;top:438px" width="50" height="3" viewBox="0 0 50 3"><polyline points="0,2 2,0 4,2 6,0 8,2 10,0 12,2 14,0 16,2 18,0 20,2 22,0 24,2 26,0 28,2 30,0 32,2 34,0 36,2 38,0 40,2 42,0 44,2 46,0 48,2 50,0" stroke="#e04040" stroke-width="1.1" fill="none"/></svg>
 <svg class="a" style="left:532px;top:479px" width="50" height="3" viewBox="0 0 50 3"><polyline points="0,2 2,0 4,2 6,0 8,2 10,0 12,2 14,0 16,2 18,0 20,2 22,0 24,2 26,0 28,2 30,0 32,2 34,0 36,2 38,0 40,2 42,0 44,2 46,0 48,2 50,0" stroke="#e04040" stroke-width="1.1" fill="none"/></svg>
 <div class="a" style="left:524px;top:396px;width:2px;height:132px;background:#8a8a8a"></div>
 <div class="a" style="left:525px;top:526px;width:100px;height:2px;background:#8a8a8a"></div>
 <div class="a" style="left:519px;top:390px;width:11px;height:11px;border-radius:50%;background:#fff;border:1.5px solid #8a8a8a"></div>
 <div class="a" style="left:519px;top:455px;width:11px;height:11px;border-radius:50%;background:#fff;border:1.5px solid #8a8a8a"></div>
 <div class="a" style="left:519px;top:521px;width:11px;height:11px;border-radius:50%;background:#fff;border:1.5px solid #8a8a8a"></div>
</div>
<!-- mini toolbar -->
<div class="a" style="left:700px;top:248px;width:134px;height:70px;background:#fff;box-shadow:0 0 4px rgba(0,0,0,.18)"></div>
<div class="a" style="left:704px;top:253px;width:130px;height:28px;background:#fff;border:1px solid #605e5c"></div>
<div class="a" style="left:708px;top:257px;width:41px;height:19px;background:#5c5c5c"></div>
<div class="a" style="left:708px;top:259px;font-size:14px;color:#fff">Corbel</div>
<div class="a" style="left:818px;top:254px;width:15px;height:26px;background:#ebebeb"></div>
<svg class="a" style="left:819px;top:263px" width="12" height="8" viewBox="0 0 12 8"><path d="M1 1.5L6 6.5L11 1.5" stroke="#323130" stroke-width="1.2" fill="none"/></svg>
<div class="a" style="left:704px;top:285px;width:28px;height:27px;background:#e1dfdd"></div>
<div class="a" style="left:704px;top:289px;width:28px;text-align:center;font-size:17px;font-weight:bold;color:#252423">B</div>
<div class="a" style="left:737px;top:288px;width:18px;text-align:center;font-family:'Liberation Serif';font-style:italic;font-size:19px;color:#252423">I</div>
<div class="a" style="left:767px;top:283px;width:60px;height:26px;background:#fff;box-shadow:0 1px 4px rgba(0,0,0,.25)"></div>
<svg class="a" style="left:825px;top:290px" width="8" height="14" viewBox="0 0 8 14"><path d="M0 0L6 7L0 14Z" fill="#fff"/></svg>
<div class="a" style="left:767px;top:290px;width:60px;text-align:center;font-size:12px;color:#323130">Calibri</div>
<!-- status -->
<div id="status" class="a">
 <div class="a" style="left:14px;top:4px;font-size:13.5px;color:#474543;letter-spacing:.2px">Slide 2 of 11</div>
 <div class="a" style="left:107px;top:4px;font-size:13px;color:#474543">English (U.S.)</div>
 <svg class="a" style="left:764px;top:4px" width="18" height="18" viewBox="0 0 18 18"><path d="M5.1 6.5V5.3L10.3 2.3L15.5 5.3V11.3L10.3 14.3L8.6 13.3" fill="none" stroke="#3a6ea5" stroke-width="1.1"/><path d="M5 10.3L7.1 11.5V13.9L5 15.1L2.9 13.9V11.5Z" fill="none" stroke="#3a6ea5" stroke-width="1.1"/></svg>
 <div class="a" style="left:785px;top:3px;font-size:13.5px;color:#474543">Loading</div>
 <div class="a" style="left:1087px;top:1px;width:36px;height:21px;background:#c8c6c4"></div>
 <div class="a" style="left:1098px;top:6px;width:16px;height:12px;border:1.2px solid #323130"></div>
 <div class="a" style="left:915px;top:12px;width:1px;height:6px;background:#555"></div>
 <div class="a" style="left:942px;top:12px;width:1px;height:6px;background:#555"></div>
 <div class="a" style="left:1029px;top:17px;width:8px;height:1px;background:#555"></div>
 <svg class="a" style="left:1133px;top:4px" width="16" height="16" viewBox="0 0 16 16"><rect x="1.5" y="1.5" width="5" height="5" fill="none" stroke="#323130"/><rect x="9.5" y="1.5" width="5" height="5" fill="none" stroke="#323130"/><rect x="1.5" y="9.5" width="5" height="5" fill="none" stroke="#323130"/><rect x="9.5" y="9.5" width="5" height="5" fill="none" stroke="#323130"/></svg>
 <svg class="a" style="left:1170px;top:4px" width="16" height="16" viewBox="0 0 16 16"><path d="M1 1.5H15M3 1.5V9.5H13V1.5M8 9.5V14.5M5 14.5H11M5.5 5.5H10.5" stroke="#323130" stroke-width="1.1" fill="none"/></svg>
 <div class="a" style="left:1205px;top:4px;font-size:13.5px;color:#474543">79%</div>
 <svg class="a" style="left:1249px;top:3px" width="18" height="18" viewBox="0 0 18 18"><rect x="6" y="6" width="6" height="6" fill="none" stroke="#323130" stroke-width="1.1"/><path d="M3 7L1 9L3 11M15 7L17 9L15 11M7 3L9 1L11 3M7 15L9 17L11 15" stroke="#323130" stroke-width="1.1" fill="none"/></svg>
</div>
<div id="dd" class="a">
 <div class="a" style="left:0;top:200px;width:284px;height:32px;background:#f3f2f1"></div>
 <svg class="a" style="left:148px;top:-8px" width="8" height="10" viewBox="0 0 8 10"><path d="M6 0C6 4 5 7 2 7.5" stroke="#555" stroke-width="1" fill="none"/></svg>
 <svg class="a" style="left:0;top:0" width="301" height="876" viewBox="0 0 301 876">
<text x="16.5" y="30.4" font-family="Liberation Sans" font-weight="normal" font-style="normal" font-size="16.5" fill="#6a6a6a" textLength="160.0" lengthAdjust="spacingAndGlyphs">Bradley Hand ITC</text>
<text x="16.5" y="61.7" font-family="Liberation Sans" font-weight="bold" font-style="normal" font-size="15.5" fill="#252423" stroke="#252423" stroke-width="0.6" textLength="105.0" lengthAdjust="spacingAndGlyphs">Britannic Bold</text>
<text x="16.5" y="94.0" font-family="Liberation Serif" font-weight="bold" font-style="normal" font-size="17" fill="#252423" stroke="#252423" stroke-width="0.6" textLength="90.0" lengthAdjust="spacingAndGlyphs">Broadway</text>
<text x="16.5" y="125.8" font-family="Liberation Sans" font-weight="normal" font-style="normal" font-size="15" fill="#252423" textLength="98.0" lengthAdjust="spacingAndGlyphs">Browallia New</text>
<text x="16.5" y="157.5" font-family="Liberation Sans" font-weight="normal" font-style="normal" font-size="15" fill="#252423" textLength="94.0" lengthAdjust="spacingAndGlyphs">BrowalliaUPC</text>
<text x="16.5" y="189.6" font-family="Liberation Serif" font-weight="bold" font-style="italic" font-size="15" fill="#252423" textLength="104.0" lengthAdjust="spacingAndGlyphs">Brush Script MT</text>
<text x="16.5" y="222.0" font-family="Liberation Sans" font-weight="normal" font-style="normal" font-size="15.5" fill="#201f1e" textLength="44.5" lengthAdjust="spacingAndGlyphs">Calibri</text>
<text x="16.5" y="254.0" font-family="Liberation Sans" font-weight="normal" font-style="normal" font-size="15.5" fill="#444" textLength="82.0" lengthAdjust="spacingAndGlyphs">Calibri Light</text>
<text x="16.5" y="285.7" font-family="Liberation Serif" font-weight="normal" font-style="normal" font-size="16" fill="#444" textLength="99.5" lengthAdjust="spacingAndGlyphs">Californian FB</text>
<text x="16.5" y="318.0" font-family="Liberation Serif" font-weight="normal" font-style="normal" font-size="16" fill="#333" textLength="79.0" lengthAdjust="spacingAndGlyphs">Calisto MT</text>
<text x="16.5" y="350.0" font-family="Liberation Serif" font-weight="normal" font-style="normal" font-size="16" fill="#333" textLength="59.5" lengthAdjust="spacingAndGlyphs">Cambria</text>
<text x="16.5" y="382.0" font-family="Liberation Serif" font-weight="normal" font-style="normal" font-size="16" fill="#333" textLength="100.5" lengthAdjust="spacingAndGlyphs">Cambria Math</text>
<text x="16.5" y="413.6" font-family="Liberation Sans" font-weight="normal" font-style="normal" font-size="15.5" fill="#333" textLength="60.0" lengthAdjust="spacingAndGlyphs">Candara</text>
<text x="16.5" y="445.7" font-family="Liberation Serif" font-weight="normal" font-style="normal" font-size="15.5" fill="#777" textLength="96.0" lengthAdjust="spacingAndGlyphs">CASTELLAR</text>
<text x="16.5" y="477.0" font-family="Liberation Sans" font-weight="normal" font-style="italic" font-size="15.5" fill="#333" textLength="71.0" lengthAdjust="spacingAndGlyphs">Cavolini</text>
<text x="16.5" y="509.7" font-family="Liberation Serif" font-weight="normal" font-style="normal" font-size="16" fill="#333" textLength="58.0" lengthAdjust="spacingAndGlyphs">Century</text>
<text x="16.5" y="541.8" font-family="Liberation Sans" font-weight="normal" font-style="normal" font-size="15.5" fill="#333" textLength="115.0" lengthAdjust="spacingAndGlyphs">Century Gothic</text>
<text x="16.5" y="573.7" font-family="Liberation Serif" font-weight="normal" font-style="normal" font-size="16" fill="#333" textLength="142.7" lengthAdjust="spacingAndGlyphs">Century Schoolbook</text>
<text x="16.5" y="605.6" font-family="Liberation Sans" font-weight="normal" font-style="normal" font-size="12" fill="#333" textLength="32.0" lengthAdjust="spacingAndGlyphs">Chiller</text>
<text x="16.5" y="637.8" font-family="Liberation Serif" font-weight="normal" font-style="normal" font-size="17" fill="#666" textLength="106.8" lengthAdjust="spacingAndGlyphs">Colonna MT</text>
<text x="16.5" y="670.0" font-family="Liberation Sans" font-weight="normal" font-style="normal" font-size="15" fill="#252423" textLength="104.0" lengthAdjust="spacingAndGlyphs">Comic Sans MS</text>
<text x="16.5" y="701.0" font-family="Liberation Mono" font-weight="normal" font-style="normal" font-size="15.5" fill="#333" textLength="70.0" lengthAdjust="spacingAndGlyphs">Consolas</text>
<text x="16.5" y="733.7" font-family="Liberation Serif" font-weight="normal" font-style="normal" font-size="16" fill="#333" textLength="76.0" lengthAdjust="spacingAndGlyphs">Constantia</text>
<text x="16.5" y="766.0" font-family="Liberation Serif" font-weight="bold" font-style="normal" font-size="16.5" fill="#333" stroke="#333" stroke-width="0.6" textLength="112.0" lengthAdjust="spacingAndGlyphs">Cooper Black</text>
<text x="16.5" y="797.8" font-family="Liberation Sans" font-weight="bold" font-style="normal" font-size="13" fill="#333" textLength="242.8" lengthAdjust="spacingAndGlyphs"><tspan font-size="16.900000000000002">C</tspan><tspan font-size="13">OPPERPLATE</tspan><tspan font-size="13"> </tspan><tspan font-size="16.900000000000002">G</tspan><tspan font-size="13">OTHIC</tspan><tspan font-size="13"> </tspan><tspan font-size="16.900000000000002">B</tspan><tspan font-size="13">OLD</tspan></text>
<text x="16.5" y="830.0" font-family="Liberation Sans" font-weight="normal" font-style="normal" font-size="13" fill="#333" textLength="236.5" lengthAdjust="spacingAndGlyphs"><tspan font-size="16.900000000000002">C</tspan><tspan font-size="13">OPPERPLATE</tspan><tspan font-size="13"> </tspan><tspan font-size="16.900000000000002">G</tspan><tspan font-size="13">OTHIC</tspan><tspan font-size="13"> </tspan><tspan font-size="16.900000000000002">L</tspan><tspan font-size="13">IGHT</tspan></text>
<text x="16.5" y="860.6" font-family="Liberation Sans" font-weight="normal" font-style="normal" font-size="15.5" fill="#333" textLength="43.4" lengthAdjust="spacingAndGlyphs">Corbel</text>
</svg>
 <div class="a" style="left:290px;top:112px;width:5px;height:45px;background:#8a8886;border-radius:3px"></div>
</div>
</div>
</div>
</div>
<div class="a" style="left:1279px;top:72px;width:1px;height:888px;background:#1e1e1e"></div>
<svg class="a" style="left:973px;top:352px" width="14" height="16" viewBox="0 0 14 16"><path d="M0.5 8.5H2.2V10H3.2V1.2L4.8 0.6L5.6 1.4L4.6 2L4.5 4.6L13.3 7.6V15.6H0.5Z" fill="#000"/><path d="M6.5 8.5H10.5" stroke="#555" stroke-width=".6"/></svg>
</body></html>
